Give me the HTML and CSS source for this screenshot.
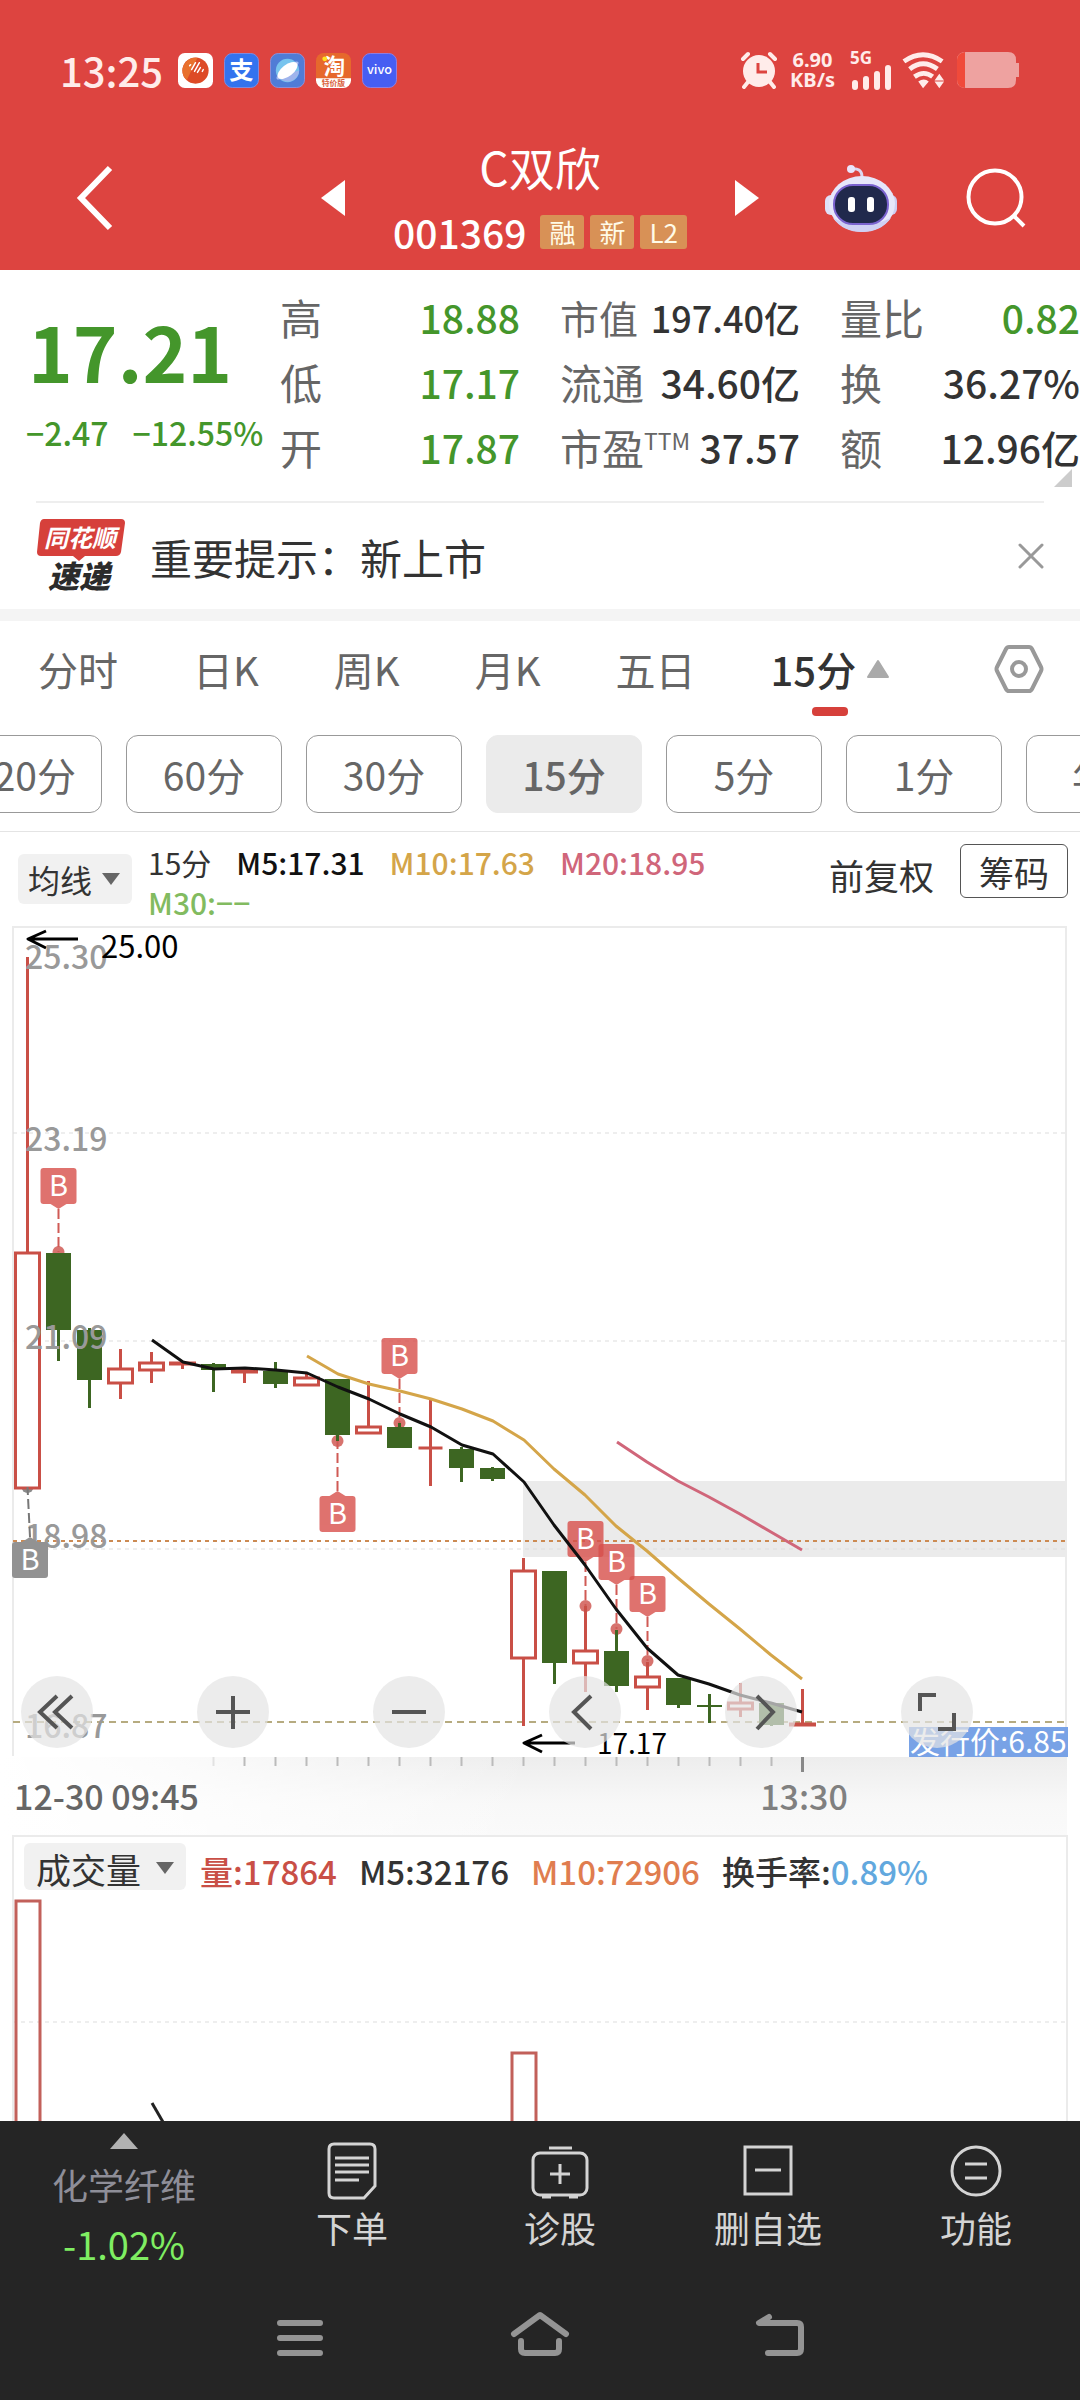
FILE: index.html
```
<!DOCTYPE html>
<html lang="zh-CN">
<head>
<meta charset="UTF-8">
<meta name="viewport" content="width=device-width, initial-scale=1.0">
<title>C双欣 001369</title>
<link rel="stylesheet" href="styles.css">
</head>
<body>
<header class="header">
    <div class="status">
        <div class="status-left">
            <span class="clock">13:25</span>
            <svg class="app" viewBox="0 0 36 36"><rect width="36" height="36" rx="7" fill="#fff"/><circle cx="18" cy="18" r="13.500" fill="#dd4a26"/><path d="M6 12a13.500 13.500 0 0 1 14-7L9 28a13 13 0 0 1-3-16z" fill="#e8702c"/><path d="M12 13l1-1M14 17l4-7M17 19l5-9M20 20l3-5M25 19l1-2" stroke="#fff" stroke-width="1.500" stroke-linecap="round"/></svg>
            <svg class="app" viewBox="0 0 36 36"><rect x=".5" y=".5" width="35" height="35" rx="8" fill="#3373ee" stroke="#7f8be0"/><text x="18" y="27" font-size="25" text-anchor="middle" font-weight="700" fill="#fff">支</text></svg>
            <svg class="app" viewBox="0 0 36 36"><rect x=".5" y=".5" width="35" height="35" rx="8" fill="#507cd6" stroke="#8f8fd8"/><circle cx="18" cy="18" r="12" fill="#78c4ee"/><path d="M8 24a12 12 0 0 0 22-6z" fill="#9fb4ec"/><ellipse cx="18" cy="18" rx="14" ry="4" transform="rotate(-38 18 18)" fill="#a9bdf0"/><ellipse cx="18" cy="18" rx="12" ry="6" transform="rotate(-38 18 18)" fill="#fff"/></svg>
            <svg class="app" viewBox="0 0 36 36"><rect width="36" height="36" rx="8" fill="#e6682c"/><path d="M0 26h36v2a8 8 0 0 1-8 8H8a8 8 0 0 1-8-8z" fill="#fff"/><text x="19" y="22" font-size="22" text-anchor="middle" font-weight="700" fill="#fff">淘</text><circle cx="9" cy="6" r="2.500" fill="#ffe11f"/><text x="18" y="34" font-size="8" text-anchor="middle" font-weight="700" fill="#d9603a">特价版</text></svg>
            <svg class="app" viewBox="0 0 36 36"><rect x=".5" y=".5" width="35" height="35" rx="8" fill="#465ef2" stroke="#8f7fe0"/><text x="18" y="22" font-size="13" text-anchor="middle" font-weight="500" fill="#fff">vivo</text></svg>
        </div>
        <div class="status-right">
            <svg width="38" height="38" viewBox="0 0 38 38"><g stroke="#ffecea" stroke-width="4" stroke-linecap="round"><path d="M3 8l5-5M35 8l-5-5M8 31l-4 5M30 31l4 5"/></g><circle cx="19" cy="20" r="16" fill="#ffecea"/><path d="M18 12v9h9" fill="none" stroke="#dd4440" stroke-width="3"/></svg>
            <span class="speed">6.90<br>KB/s</span>
            <span class="signal">
                <span>5G</span>
                <svg width="42" height="25" viewBox="0 0 42 25"><path d="M5 18v4M16 14v8M27 9v13M38 3v19" stroke="#ffecea" stroke-width="6" stroke-linecap="round"/></svg>
            </span>
            <svg width="44" height="38" viewBox="0 0 46 38"><g fill="none" stroke="#ffecea" stroke-width="5"><path d="M2 10q20-14 40 0M8 18q14-11 29 0M13 26q10-7 19 0"/></g><path d="M17 31q6-4 11 0l-6 7zM34 30l5-7 5 7zM34 31l5 7 5-7z" fill="#ffecea"/></svg>
            <svg width="64" height="38" viewBox="0 0 64 38"><path d="M10 1h42q8 0 8 8v3h3v14h-3v3q0 8-8 8H10q-9 0-9-8V9q0-8 9-8z" fill="#eea2a0"/><path d="M9 1Q1 2 1 9v20q0 7 8 8z" fill="#f04a3a"/></svg>
        </div>
    </div>
    <nav class="title-bar">
        <button class="back" aria-label="返回"><svg width="38" height="66" viewBox="0 0 38 66"><path d="M34 3L5 33l29 30" fill="none" stroke="#fff" stroke-width="6"/></svg></button>
        <div class="switcher">
            <button aria-label="上一只"><svg width="24" height="36" viewBox="0 0 24 36"><path d="M24 0v36L0 18z" fill="#fff"/></svg></button>
            <div class="stock">
                <h1>C双欣</h1>
                <p><span class="code">001369</span><span class="tag">融</span><span class="tag">新</span><span class="tag">L2</span></p>
            </div>
            <button aria-label="下一只"><svg width="24" height="36" viewBox="0 0 24 36"><path d="M0 0v36l24-18z" fill="#fff"/></svg></button>
        </div>
        <div class="actions">
            <button aria-label="智能助手"><svg width="72" height="68" viewBox="0 0 72 68"><path d="M25 5q12-2 12 8" fill="none" stroke="#dcd8f2" stroke-width="3"/><circle cx="26" cy="5" r="4" fill="#e9e5fb"/><rect x="0" y="31" width="14" height="20" rx="6" fill="#dfe0f8"/><rect x="58" y="31" width="14" height="20" rx="6" fill="#cdcef2"/><ellipse cx="37" cy="40" rx="33" ry="28" fill="#e6e7fa"/><path d="M8 54q28 14 58 0-10 14-29 14T8 54z" fill="#cfd0f4"/><rect x="9" y="21" width="54" height="39" rx="19" fill="#20294c" stroke="#7a63cf" stroke-width="2"/><rect x="23" y="33" width="7" height="15" rx="3" fill="#fff"/><rect x="42" y="33" width="7" height="15" rx="3" fill="#fff"/></svg></button>
            <button aria-label="搜索"><svg width="60" height="60" viewBox="0 0 60 60"><circle cx="29" cy="29" r="26.500" fill="none" stroke="#fff" stroke-width="4"/><path d="M47 47l11 11" stroke="#fff" stroke-width="4"/></svg></button>
        </div>
    </nav>
</header>

<main>
    <section class="quote">
        <div class="price">
            <strong>17.21</strong>
            <p><span>−2.47</span><span>−12.55%</span></p>
        </div>
        <dl>
            <div><dt>高</dt><dd class="down">18.88</dd></div>
            <div><dt>低</dt><dd class="down">17.17</dd></div>
            <div><dt>开</dt><dd class="down">17.87</dd></div>
        </dl>
        <dl>
            <div class="long"><dt>市值</dt><dd>197.40亿</dd></div>
            <div><dt>流通</dt><dd>34.60亿</dd></div>
            <div><dt>市盈<sup>TTM</sup></dt><dd>37.57</dd></div>
        </dl>
        <dl>
            <div><dt>量比</dt><dd class="down">0.82</dd></div>
            <div><dt>换</dt><dd>36.27%</dd></div>
            <div><dt>额</dt><dd>12.96亿</dd></div>
        </dl>
        <i class="more"></i>
    </section>

    <section class="notice">
        <svg width="90" height="76" viewBox="0 0 90 76"><path d="M8 1h77q4 0 4 4l-4 29q-1 4-5 4H49l-6 5-6-5H5q-4 0-4-4L4 5q1-4 4-4z" fill="#d6403b"/><text x="44" y="29" font-size="24" font-weight="700" font-style="italic" text-anchor="middle" fill="#fff">同花顺</text><text x="43" y="70" font-size="31" font-weight="900" font-style="italic" text-anchor="middle" fill="#2b2b2b">速递</text></svg>
        <p>重要提示：新上市</p>
        <button aria-label="关闭"><svg width="26" height="26" viewBox="0 0 26 26"><path d="M2 2l22 22M24 2L2 24" stroke="#999" stroke-width="3" stroke-linecap="round"/></svg></button>
    </section>

    <nav class="tabs">
        <button>分时</button>
        <button>日K</button>
        <button>周K</button>
        <button>月K</button>
        <button>五日</button>
        <button class="active">15分<svg width="24" height="20" viewBox="0 0 24 20"><path d="M12 2l10 16H2z" fill="#aaa" stroke="#aaa" stroke-width="2" stroke-linejoin="round"/></svg></button>
        <button class="setting" aria-label="设置"><svg width="50" height="50" viewBox="0 0 50 50"><g fill="none" stroke="#999" stroke-width="4"><path d="M15 3h20q2 0 3 2l9 18q1 2 0 4l-9 18q-1 2-3 2H15q-2 0-3-2L3 27q-1-2 0-4l9-18q1-2 3-2z"/><circle cx="25" cy="25" r="7"/></g></svg></button>
    </nav>

    <div class="periods">
        <button>120分</button>
        <button>60分</button>
        <button>30分</button>
        <button class="active">15分</button>
        <button>5分</button>
        <button>1分</button>
        <button>年K</button>
    </div>

    <section class="ma-bar">
        <label class="picker"><select aria-label="主图指标"><option>均线</option></select></label>
        <p class="legend"><span class="name">15分</span><span class="m5">M5:17.31</span><span class="m10">M10:17.63</span><span class="m20">M20:18.95</span><span class="m30">M30:−−</span></p>
        <button class="adjust">前复权</button>
        <button class="chips">筹码</button>
    </section>

    <section class="chart">
        <svg id="kline" viewBox="0 926 1080 831">
            <g class="frame"><path d="M13 1756V927h1053v829"/></g>
            <g class="grid"><path d="M13 1133h1053M13 1341h1053"/></g>
            <rect x="523" y="1481" width="544" height="76" fill="#ebebeb"/>
            <path class="grid" d="M13 1549h1053"/>
            <path d="M13 1541h1053" stroke="#cc8a52" stroke-width="2" stroke-dasharray="4 4"/>
            <path d="M13 1722h1053" stroke="#b6ab80" stroke-width="2" stroke-dasharray="7 5"/>
            <g id="dots"></g>
            <g id="candles"></g>
            <g class="axis-label">
                <text x="25" y="969">25.30</text>
                <text x="25" y="1151">23.19</text>
                <text x="25" y="1349">21.09</text>
                <text x="25" y="1548">18.98</text>
                <text x="25" y="1738">16.87</text>
            </g>
            <g id="markers"></g>
            <g fill="none" stroke-width="3" stroke-linejoin="round">
                <path stroke="#d4a549" d="M307 1356L338 1374 369 1384 400 1391 431 1399 462 1409 493 1421 524 1440 554 1469 585 1495 616 1526 647 1551 678 1578 709 1604 740 1629 771 1655 802 1679"/>
                <path stroke="#111" d="M152 1340L183 1362 214 1369 245 1368 276 1370 307 1373 338 1387 369 1399 400 1414 431 1427 462 1445 493 1454 524 1482 554 1525 585 1565 616 1609 647 1648 678 1675 709 1684 740 1695 771 1703 802 1712"/>
                <path stroke="#d0667a" d="M617 1442L647 1462 678 1481 709 1497 740 1514 771 1532 802 1550"/>
                <path stroke="#000" d="M78 939H28M46 931L28 939l18 9M575 1743H524M542 1735l-18 8 18 9"/>
            </g>
            <text x="101" y="958" font-size="31">25.00</text>
            <text class="low" x="597" y="1754">17.17</text>
            <rect x="909" y="1727" width="159" height="30" fill="#78a2e6"/>
            <text class="issue" x="910" y="1753">发行价:6.85</text>
        </svg>
        <div class="controls">
            <button aria-label="最早"><svg viewBox="0 0 72 72"><path d="M36 20L19 36l17 16M51 20L34 36l17 16"/></svg></button>
            <button aria-label="放大"><svg viewBox="0 0 72 72"><path d="M19 36h34M36 20v33"/></svg></button>
            <button aria-label="缩小"><svg viewBox="0 0 72 72"><path d="M19 36h34"/></svg></button>
            <button aria-label="左移"><svg viewBox="0 0 72 72"><path d="M42 20L25 36l17 17"/></svg></button>
            <button aria-label="右移"><svg viewBox="0 0 72 72"><path d="M32 20l16 16-16 17"/></svg></button>
            <button aria-label="全屏"><svg viewBox="0 0 72 72"><path d="M35 19H19v16M53 37v16H37"/></svg></button>
        </div>
    </section>

    <svg class="time-axis" id="timeAxis" viewBox="0 1757 1080 78">
        <defs>
            <linearGradient id="fade" x1="0" x2="1"><stop offset="0" stop-color="#fff"/><stop offset=".15" stop-color="#fff" stop-opacity=".8"/><stop offset=".5" stop-color="#fff" stop-opacity="0"/></linearGradient>
            <linearGradient id="shade" x1="0" y1="0" x2="0" y2="1"><stop offset="0" stop-color="#ededed"/><stop offset=".6" stop-color="#f8f8f8"/><stop offset="1" stop-color="#fafafa"/></linearGradient>
        </defs>
        <rect x="0" y="1757" width="1067" height="78" fill="url(#shade)"/>
        <rect x="0" y="1757" width="1067" height="78" fill="url(#fade)"/>
        <text x="14" y="1810" fill="#666">12-30 09:45</text>
        <text x="804" y="1810" fill="#808080" text-anchor="middle">13:30</text>
    </svg>

    <section class="volume">
        <div class="volume-bar">
            <label class="picker wide"><select aria-label="副图指标"><option>成交量</option></select></label>
            <p class="volume-legend"><span class="vol">量:17864</span><span>M5:32176</span><span class="v10">M10:72906</span><span>换手率:<b>0.89%</b></span></p>
        </div>
        <svg viewBox="0 1898 1080 223">
            <path class="grid" d="M13 2022h1053"/>
            <path d="M16 2125V1901h24v224M512 2125V2053h24v72" fill="none" stroke="#c2605a" stroke-width="3"/>
            <path d="M152 2103l11 19" stroke="#222" stroke-width="3"/>
        </svg>
    </section>
</main>

<footer>
    <nav class="toolbar">
        <a href="#" class="sector"><svg width="28" height="16" viewBox="0 0 28 16"><path d="M14 0l14 16H0z" fill="#b2b2b2"/></svg><span>化学纤维</span><em>-1.02%</em></a>
        <a href="#"><svg viewBox="0 0 60 60"><path d="M12 3h36q5 0 5 5v37L42 57H12q-5 0-5-5V8q0-5 5-5z"/><path d="M13 17h34M13 24h34M13 31h34M13 39h24"/></svg><span>下单</span></a>
        <a href="#"><svg viewBox="0 0 60 60"><rect x="3" y="12" width="54" height="42" rx="7"/><path d="M19 7h23M20 33h20M30 23v20M12 56h9M39 56h9"/></svg><span>诊股</span></a>
        <a href="#"><svg viewBox="0 0 60 60"><path d="M7 6h46v47H7zM17 29h26"/></svg><span>删自选</span></a>
        <a href="#"><svg viewBox="0 0 60 60"><circle cx="30" cy="30" r="24"/><path d="M19 23h22M19 37h22"/></svg><span>功能</span></a>
    </nav>
    <nav class="system">
        <button aria-label="任务"><svg viewBox="0 0 60 50"><path d="M10 10h40M10 25h40M10 40h40"/></svg></button>
        <button aria-label="主页"><svg viewBox="0 0 60 50"><path d="M4 21L30 2l26 19M11 28v8q0 4 4 4h30q4 0 4-4v-8"/></svg></button>
        <button aria-label="返回"><svg viewBox="0 0 60 50"><path d="M19 4L9 10h38q4 0 4 4v22q0 4-4 4H18"/></svg></button>
    </nav>
</footer>

<script>
    // [颜色, 实体上, 实体下, 影线上, 影线下]
    const candles = [
        ['r', 1253, 1488, 957, 1253], ['g', 1253, 1330, 1253, 1361], ['g', 1330, 1380, 1328, 1408],
        ['r', 1369, 1383, 1349, 1399], ['r', 1363, 1370, 1352, 1383], ['r', 1363, 1364, 1363, 1369],
        ['g', 1364, 1370, 1363, 1392], ['r', 1370, 1372, 1370, 1383], ['g', 1371, 1384, 1362, 1388],
        ['r', 1378, 1385, 1374, 1378], ['g', 1379, 1435, 1379, 1441], ['r', 1427, 1433, 1381, 1427],
        ['g', 1427, 1448, 1423, 1448], ['r', 1448, 1448, 1399, 1486], ['g', 1449, 1468, 1447, 1482],
        ['g', 1468, 1479, 1467, 1481], ['r', 1571, 1658, 1558, 1726], ['g', 1571, 1663, 1571, 1684],
        ['r', 1651, 1663, 1606, 1692], ['g', 1651, 1686, 1630, 1692], ['r', 1677, 1687, 1662, 1710],
        ['g', 1678, 1705, 1678, 1708], ['g', 1705, 1707, 1694, 1723], ['r', 1703, 1709, 1683, 1717],
        ['g', 1703, 1725, 1703, 1726], ['r', 1724, 1725, 1689, 1724]
    ];
    // [第几根, 标记框顶, 圆点, 灰色]
    const marks = [[1, 1168, 1252], [10, 1496, 1441], [12, 1338, 1423], [18, 1521, 1606], [19, 1544, 1629], [20, 1576, 1661], [0, 1542, 1487, true]];
    const xAt = i => 27.5 + 31 * i;

    let html = '';
    candles.forEach(([color, top, bottom, high, low], i) => {
        const x = xAt(i);
        if (color === 'g') {
            html += `<path d="M${x} ${high}V${low}" stroke="#3d6622" stroke-width="3"/><rect x="${x - 12.5}" y="${top}" width="25" height="${bottom - top}" fill="#3d6622"/>`;
        } else if (top === bottom) {
            html += `<path d="M${x} ${high}V${low}M${x - 12} ${top}h24" stroke="#c94f46" stroke-width="3"/>`;
        } else {
            html += `<g stroke="#c94f46" stroke-width="3" fill="#fff"><path d="M${x} ${high}V${low}"/><rect x="${x - 12}" y="${top}" width="24" height="${bottom - top}"/></g>`;
        }
    });
    document.getElementById('candles').innerHTML = html;

    let dots = '';
    html = '';
    marks.forEach(([i, top, dot, gray]) => {
        const x = xAt(i);
        const cx = gray ? 30 : x;
        const below = top > dot;
        const edge = below ? top : top + 36;
        const tip = below ? top - 5 : top + 41;
        const fill = gray ? '#929292' : '#d84f4b';
        const line = gray ? '#777' : '#d05a55';
        dots += `<circle cx="${x}" cy="${dot}" r="6" fill="${line}" opacity=".85"/>`;
        html += `<path d="M${cx} ${tip}L${x} ${dot}" stroke="${line}" stroke-width="2" stroke-dasharray="10 4"/>`;
        html += `<g opacity="${gray ? 1 : 0.8}" fill="${fill}"><rect x="${cx - 18}" y="${top}" width="36" height="36" rx="3"/><path d="M${cx - 8} ${edge}L${cx} ${tip}L${cx + 8} ${edge}z"/></g>`;
        html += `<text x="${cx}" y="${top + 28}" font-size="29" text-anchor="middle" fill="#fff">B</text>`;
    });
    document.getElementById('dots').innerHTML = dots;
    document.getElementById('markers').innerHTML = html;

    let ticks = '';
    for (let i = 6; i < 25; i++) {
        ticks += `<path d="M${xAt(i)} 1757v9" stroke="${i < 7 ? '#e2e2e2' : '#bbb'}" stroke-width="2"/>`;
    }
    ticks += `<path d="M${xAt(25)} 1757v15" stroke="#888" stroke-width="3"/>`;
    document.getElementById('timeAxis').insertAdjacentHTML('beforeend', ticks);
</script>
</body>
</html>
```

FILE: styles.css
```
* {
    box-sizing: border-box;
}

body {
    margin: 0;
    min-height: 100vh;
    display: flex;
    flex-direction: column;
    background: #fff;
    color: #333;
    font-family: "Noto Sans CJK SC", sans-serif;
    overflow-x: hidden;
}

h1, p, dl, dd {
    margin: 0;
}

button {
    padding: 0;
    border: none;
    background: none;
    color: inherit;
    font: inherit;
    cursor: pointer;
}

svg {
    display: block;
}

/* 顶部 */
.header {
    background: #dd4440;
    color: #fff;
}

.status {
    display: flex;
    justify-content: space-between;
    align-items: center;
    height: 126px;
    padding: 14px 60px 0;
    color: #ffecea;
}

.status-left,
.status-right {
    display: flex;
    align-items: center;
}

.status-left {
    gap: 11px;
}

.clock {
    margin-right: 4px;
    font-size: 40px;
    font-weight: 500;
}

.app {
    width: 35px;
    height: 35px;
}

.status-right {
    gap: 10px;
}

.speed {
    margin-left: 2px;
    font-family: "Noto Sans", sans-serif;
    font-size: 20px;
    font-weight: 700;
    line-height: 20px;
    text-align: center;
}

.signal {
    margin-left: 5px;
    font-family: "Noto Sans", sans-serif;
    font-size: 17px;
    font-weight: 700;
    line-height: 14px;
}

.title-bar {
    display: grid;
    grid-template-columns: 1fr 438px 1fr;
    align-items: center;
    height: 144px;
    padding: 0 54px;
}

.back {
    justify-self: start;
    margin-left: 22px;
}

.switcher {
    display: flex;
    justify-content: space-between;
    align-items: center;
}

.stock {
    text-align: center;
}

.stock h1 {
    font-size: 46px;
    font-weight: 400;
    line-height: 68px;
}

.stock p {
    display: flex;
    justify-content: center;
    align-items: center;
    gap: 6px;
    height: 64px;
}

.code {
    margin-right: 8px;
    font-size: 39px;
    font-weight: 500;
}

.tag {
    padding: 0 9px;
    border-radius: 3px;
    background: #d89156;
    color: #fffbe8;
    font-size: 26px;
    line-height: 34px;
}

.actions {
    display: flex;
    justify-content: flex-end;
    align-items: center;
    gap: 69px;
}

/* 报价 */
.quote {
    position: relative;
    display: grid;
    grid-template-columns: minmax(0, 240fr) repeat(3, minmax(0, 240fr));
    column-gap: 40px;
    padding: 14px 0 22px;
}

.price strong {
    display: block;
    padding-left: 28px;
    color: #44962b;
    font-size: 76px;
    font-weight: 700;
    line-height: 132px;
}

.price p {
    display: flex;
    gap: 24px;
    padding-left: 26px;
    color: #44962b;
    font-size: 32px;
    font-weight: 500;
    line-height: 32px;
    white-space: nowrap;
}

.quote dl div {
    display: flex;
    justify-content: space-between;
    align-items: center;
    height: 65px;
    white-space: nowrap;
}

.quote dt {
    color: #666;
    font-size: 42px;
}

.quote sup {
    font-size: 23px;
    line-height: 0;
}

.quote dd {
    font-size: 39px;
    font-weight: 500;
}

.quote .long dt {
    font-size: 39px;
}

.quote .long dd {
    font-size: 36px;
}

.quote .down {
    color: #44962b;
}

.more {
    position: absolute;
    right: 8px;
    bottom: 14px;
    border: 9px solid #ccc;
    border-top-color: transparent;
    border-left-color: transparent;
}

.notice {
    display: flex;
    align-items: center;
    gap: 24px;
    height: 108px;
    margin: 0 36px;
    border-top: 2px solid #eee;
    font-size: 42px;
}

.notice p {
    flex: 1;
}

/* 周期 */
.tabs {
    display: flex;
    align-items: center;
    gap: 75px;
    height: 112px;
    padding: 0 36px 4px 38px;
    border-top: 12px solid #f4f4f4;
    color: #666;
    font-size: 40px;
}

.tabs .active {
    position: relative;
    display: flex;
    align-items: center;
    gap: 10px;
    color: #333;
    font-weight: 500;
}

.tabs .active::after {
    content: "";
    position: absolute;
    left: 50%;
    bottom: -18px;
    width: 36px;
    height: 9px;
    margin-left: -18px;
    border-radius: 4px;
    background: #d6403b;
}

.setting {
    margin-left: auto;
}

.periods {
    display: flex;
    gap: 24px;
    padding: 14px 0 18px;
    margin-left: -54px;
    overflow: hidden;
    border-bottom: 1px solid #e4e4e4;
}

.periods button {
    flex: none;
    width: 156px;
    height: 78px;
    border: 1px solid #999;
    border-radius: 12px;
    color: #666;
    font-size: 39px;
}

.periods .active {
    border-color: #ebebeb;
    background: #ebebeb;
    font-weight: 500;
}

/* 均线 */
.ma-bar {
    display: flex;
    height: 94px;
    padding: 10px 12px 0 18px;
}

.picker {
    position: relative;
    flex: none;
    align-self: flex-start;
    width: 114px;
    margin-top: 12px;
}

.picker select {
    width: 100%;
    height: 50px;
    padding: 0 10px;
    border: none;
    border-radius: 6px;
    appearance: none;
    background: #f1f1f1;
    color: #333;
    font: 32px "Noto Sans CJK SC", sans-serif;
}

.picker::after {
    content: "";
    position: absolute;
    right: 12px;
    top: 19px;
    border: 9px solid transparent;
    border-top: 12px solid #666;
    border-bottom: none;
}

.picker.wide {
    width: 162px;
    margin: 0;
}

.picker.wide select {
    height: 47px;
    padding: 0 12px;
    font-size: 35px;
}

.legend {
    display: flex;
    flex: 1;
    flex-wrap: wrap;
    align-content: flex-start;
    column-gap: 25px;
    padding: 0 60px 0 16px;
    font-size: 30px;
    font-weight: 500;
    line-height: 40px;
}

.legend .name { font-weight: 400; }
.m5 { color: #111; }
.m10 { color: #d4a549; }
.m20 { color: #d0667a; }
.m30 { color: #82bb60; }

.adjust {
    height: 64px;
    margin-right: 26px;
    font-size: 35px;
}

.chips {
    width: 108px;
    height: 54px;
    margin-top: 2px;
    border: 1px solid #555;
    border-radius: 6px;
    font-size: 35px;
}

/* 图表 */
.chart {
    position: relative;
}

.chart svg,
.time-axis,
.volume svg {
    width: 100%;
    fill: #000;
}

.frame {
    fill: none;
    stroke: #ebebeb;
    stroke-width: 2;
}

.grid {
    stroke: #ddd;
    stroke-dasharray: 4 4;
}

.axis-label {
    fill: #999;
    font-size: 32px;
    font-weight: 500;
}

.low {
    font-size: 28px;
}

.issue {
    fill: #fff;
    font-size: 30px;
}

.controls {
    position: absolute;
    left: 21px;
    right: 107px;
    bottom: 9px;
    display: flex;
    justify-content: space-between;
}

.controls button {
    width: 72px;
    height: 72px;
    border-radius: 50%;
    background: rgba(228, 228, 228, 0.7);
}

.controls svg {
    fill: none;
    stroke: #555;
    stroke-width: 4;
}

.time-axis {
    font-size: 34px;
    font-weight: 500;
}

.volume {
    position: relative;
}

.volume::before {
    content: "";
    position: absolute;
    inset: 0 12px 0 12px;
    border: 2px solid #ebebeb;
    border-bottom: none;
}

.volume-bar {
    position: relative;
    display: flex;
    align-items: center;
    gap: 14px;
    height: 63px;
    padding: 8px 24px 0;
}

.volume-legend {
    display: flex;
    gap: 22px;
    font-size: 33px;
    font-weight: 500;
    white-space: nowrap;
}

.vol { color: #c94f46; }
.v10 { color: #e07d4f; }

.volume b {
    color: #62a8de;
    font-weight: 500;
}

/* 底部 */
footer {
    flex: 1;
    background: #252525;
    color: #d4d4d4;
}

.toolbar {
    display: grid;
    grid-template-columns: 248fr 208fr 208fr 208fr 208fr;
    height: 150px;
}

.toolbar a {
    display: flex;
    flex-direction: column;
    align-items: center;
    padding-top: 20px;
    color: inherit;
    font-size: 36px;
    line-height: 52px;
    text-decoration: none;
}

.toolbar a > svg {
    width: 60px;
    height: 60px;
    fill: none;
    stroke: #d4d4d4;
    stroke-width: 3;
}

.toolbar .sector {
    padding-top: 12px;
    line-height: 60px;
}

.toolbar .sector svg {
    width: 28px;
    height: 16px;
    margin-bottom: 5px;
    stroke: none;
}

.sector span {
    color: #8e8e98;
}

.sector em {
    color: #7fee62;
    font-size: 38px;
    font-style: normal;
}

.system {
    display: flex;
    justify-content: center;
    gap: 180px;
    padding-top: 42px;
}

.system svg {
    width: 60px;
    height: 50px;
    fill: none;
    stroke: #949494;
    stroke-width: 6;
    stroke-linecap: round;
    stroke-linejoin: round;
    overflow: visible;
}
```
